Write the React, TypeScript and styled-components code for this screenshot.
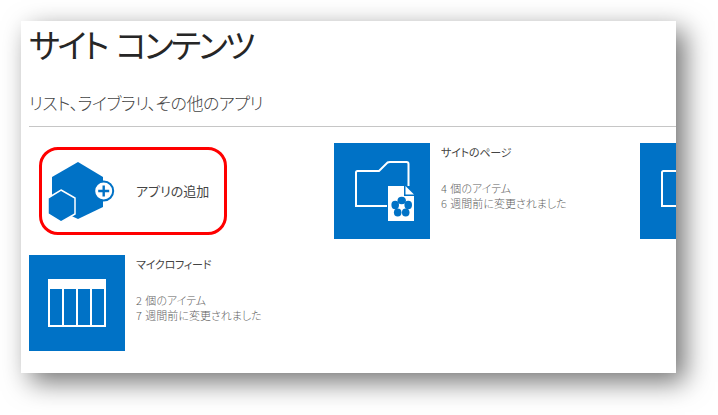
import React from 'react';
import styled, { createGlobalStyle } from 'styled-components';

const GlobalStyle = createGlobalStyle`
  html, body {
    margin: 0;
    padding: 0;
    background: #ffffff;
  }
  body {
    font-family: "Noto Sans CJK JP", "Noto Sans", sans-serif;
    font-feature-settings: "palt";
  }
`;

const Stage = styled.div`
  width: 718px;
  height: 415px;
  padding: 21px 42px 42px 21px;
  box-sizing: border-box;
  overflow: hidden;
`;

const Panel = styled.main`
  width: 655px;
  height: 352px;
  padding-left: 8px;
  box-sizing: border-box;
  background: #ffffff;
  box-shadow: 9px 9px 25px rgba(0, 0, 0, 0.55);
  overflow: hidden;
`;

const Title = styled.h1`
  margin: 0;
  height: 51px;
  font-size: 33px;
  line-height: 46px;
  letter-spacing: -2.6px;
  word-spacing: 4px;
  font-weight: 400;
  color: #262626;
  white-space: nowrap;
`;

const Subtitle = styled.h2`
  margin: 0;
  height: 55px;
  padding-top: 17px;
  box-sizing: border-box;
  border-bottom: 1px solid #c6c6c6;
  font-size: 17px;
  line-height: 28px;
  letter-spacing: -0.45px;
  font-weight: 300;
  color: #444444;
  white-space: nowrap;
`;

const Grid = styled.div`
  display: grid;
  grid-template-columns: 305px 306px 306px;
  grid-auto-rows: 96px;
  row-gap: 16px;
  margin-top: 16px;
`;

const Tile = styled.article`
  position: relative;
  display: flex;
  gap: 11px;
  min-width: 0;
`;

const Thumb = styled.div<{ $plain?: boolean }>`
  flex: none;
  width: 96px;
  height: 96px;
  background: ${props => (props.$plain ? 'transparent' : '#0072c6')};

  svg {
    display: block;
  }
`;

const Info = styled.div`
  display: flex;
  flex-direction: column;
  white-space: nowrap;
`;

const TileName = styled.div`
  font-size: 11px;
  line-height: 18px;
  letter-spacing: -0.2px;
  font-weight: 400;
  color: #444444;
`;

const Meta = styled.div`
  margin-top: 20px;
  font-size: 11px;
  line-height: 15px;
  word-spacing: 1px;
  font-weight: 300;
  color: #5f5f5f;
`;

const AddLabel = styled.div`
  align-self: center;
  font-size: 13px;
  line-height: 20px;
  font-weight: 400;
  color: #444444;
  white-space: nowrap;
`;

const Highlight = styled.div`
  position: absolute;
  left: 10px;
  top: 4px;
  width: 188px;
  height: 88px;
  box-sizing: border-box;
  border: 3px solid #ff0000;
  border-radius: 19px;
  pointer-events: none;
`;

const AddAppIcon = () => (
  <svg width="96" height="96" viewBox="0 0 96 96">
    <polygon points="49,19 74,34 74,64 49,76 23,64 23,34" fill="#0072c6" />
    <polygon points="32,47 46,55 46,71 32,79 19,71 19,55" fill="#0072c6" stroke="#ffffff" strokeWidth="1.5" />
    <circle cx="74.7" cy="48" r="9.5" fill="#ffffff" stroke="#0072c6" strokeWidth="2" />
    <path d="M74.7 42.5v11M69.2 48h11" stroke="#0072c6" strokeWidth="2.4" fill="none" />
  </svg>
);

const FolderIcon = () => (
  <svg width="96" height="96" viewBox="0 0 96 96">
    <path
      d="M53 63H22V29.5q0-1.500 1.500-1.500H45L53.500 19.500Q54.500 19 56 19H72.500Q74.500 19 74.500 21V43"
      fill="none"
      stroke="#ffffff"
      strokeWidth="2"
    />
    <path d="M54 43H70V53H80V78H54Z" fill="#ffffff" />
    <path d="M71.500 43L80 51.500H71.500Z" fill="#ffffff" />
    <g fill="#0072c6">
      <ellipse cx="67.700" cy="57.500" rx="4.200" ry="3.800" />
      <ellipse cx="74.200" cy="62" rx="3.800" ry="4.200" />
      <ellipse cx="71.700" cy="69.500" rx="3.800" ry="4" />
      <ellipse cx="63.700" cy="69.500" rx="3.800" ry="4" />
      <ellipse cx="61.200" cy="62" rx="3.800" ry="4.200" />
    </g>
    <circle cx="67.700" cy="64" r="1.800" fill="#ffffff" />
  </svg>
);

const TableIcon = () => (
  <svg width="96" height="96" viewBox="0 0 96 96">
    <rect x="19" y="24" width="58" height="48" fill="#ffffff" />
    <g fill="#0072c6">
      <rect x="21" y="34" width="12" height="36" />
      <rect x="35" y="34" width="12" height="36" />
      <rect x="49" y="34" width="12" height="36" />
      <rect x="63" y="34" width="12" height="36" />
    </g>
  </svg>
);

type ListTileProps = {
  name: string;
  items: number;
  weeks: number;
  icon: React.ReactNode;
};

const ListTile = ({ name, items, weeks, icon }: ListTileProps) => (
  <Tile>
    <Thumb>{icon}</Thumb>
    <Info>
      <TileName>{name}</TileName>
      <Meta>
        {items} 個のアイテム
        <br />
        {weeks} 週間前に変更されました
      </Meta>
    </Info>
  </Tile>
);

export default function App() {
  return (
    <>
      <GlobalStyle />
      <Stage lang="ja">
        <Panel>
          <Title>サイト コンテンツ</Title>
          <Subtitle>リスト、ライブラリ、その他のアプリ</Subtitle>
          <Grid>
            <Tile>
              <Thumb $plain>
                <AddAppIcon />
              </Thumb>
              <AddLabel>アプリの追加</AddLabel>
              <Highlight />
            </Tile>
            <ListTile name="サイトのページ" items={4} weeks={6} icon={<FolderIcon />} />
            {/* third tile is cut off by the panel edge, only its thumbnail shows */}
            <Tile>
              <Thumb>
                <FolderIcon />
              </Thumb>
            </Tile>
            <ListTile name="マイクロフィード" items={2} weeks={7} icon={<TableIcon />} />
          </Grid>
        </Panel>
      </Stage>
    </>
  );
}
